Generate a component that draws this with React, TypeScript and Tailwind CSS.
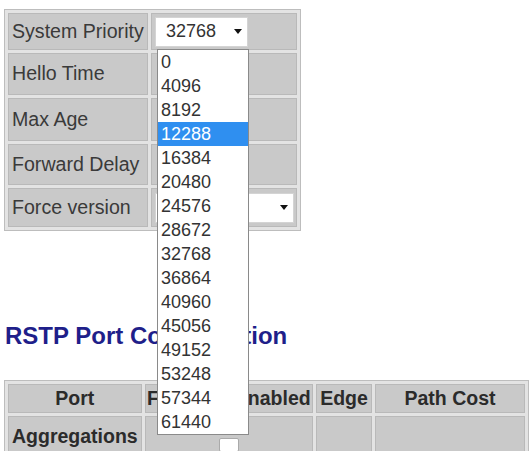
const priorities = [
  0, 4096, 8192, 12288, 16384, 20480, 24576, 28672, 32768, 36864, 40960, 45056, 49152, 53248, 57344, 61440,
]

function Arrow() {
  return (
    <svg width="8" height="5" viewBox="0 0 8 5" className="shrink-0">
      <path d="M0 0 H8 L4 5 Z" fill="#111" />
    </svg>
  )
}

const labelRows = [
  { label: 'System Priority', h: 'h-[37px]' },
  { label: 'Hello Time', h: 'h-[42px]' },
  { label: 'Max Age', h: 'h-[43px]' },
  { label: 'Forward Delay', h: 'h-[41px]' },
  { label: 'Force version', h: 'h-[39px]' },
]

export default function App() {
  return (
    <div className="relative h-[451px] w-[529px] overflow-hidden bg-white font-['Liberation_Sans',Arial,sans-serif]">
      <table className="ml-[4px] mt-[9px] border-separate border-spacing-[3px] border border-[#bdbdbd] bg-[#e3e3e3]">
        <tbody>
          {labelRows.map((row, i) => (
            <tr key={row.label}>
              <td className={`${row.h} w-[140px] whitespace-nowrap border border-[#b9b9b9] bg-[#c9c9c9] px-[3px] align-middle text-[19.6px] leading-none text-[#3a3a3a]`}>
                {row.label}
              </td>
              <td className={`${row.h} w-[146px] border border-[#b9b9b9] bg-[#c9c9c9] p-0 align-middle`}>
                {i === 0 && (
                  <div className="ml-[3px] flex h-[30px] w-[93px] items-center justify-between border border-[#d4d4d4] bg-white pl-[10px] pr-[5px] text-[18px] text-[#333]">
                    <span>32768</span>
                    <Arrow />
                  </div>
                )}
                {i === 4 && (
                  <div className="ml-[3px] flex h-[30px] w-[139px] items-center justify-end border border-[#d4d4d4] bg-white pr-[5px]">
                    <Arrow />
                  </div>
                )}
              </td>
            </tr>
          ))}
        </tbody>
      </table>

      <h2 className="ml-[5px] mt-[91px] text-[24px] font-bold leading-[28px] text-[#1f1f8a]">RSTP Port Configuration</h2>

      <table className="ml-[4px] mt-[30px] border-separate border-spacing-[3px] border border-[#bdbdbd] bg-[#e3e3e3] text-[19.5px] font-bold text-[#2b2b2b]">
        <tbody>
          <tr>
            <td className="h-[29px] w-[130px] border border-[#b9b9b9] bg-[#c9c9c9] p-0 text-center leading-none">Port</td>
            <td className="h-[29px] w-[170px] border border-[#b9b9b9] bg-[#c9c9c9] p-0 text-center leading-none">Function Enabled</td>
            <td className="h-[29px] w-[56px] border border-[#b9b9b9] bg-[#c9c9c9] p-0 text-center leading-none">Edge</td>
            <td className="h-[29px] w-[152px] border border-[#b9b9b9] bg-[#c9c9c9] p-0 text-center leading-none">Path Cost</td>
          </tr>
          <tr>
            <td className="h-[50px] border border-[#b9b9b9] bg-[#c9c9c9] px-[3px] pt-[10px] align-top leading-none">Aggregations</td>
            <td className="h-[50px] border border-[#b9b9b9] bg-[#c9c9c9] p-0 align-top">
              <div className="mx-auto mt-[21px] h-[14px] w-[20px] rounded-[2px] border border-[#aaa] bg-white" />
            </td>
            <td className="h-[50px] border border-[#b9b9b9] bg-[#c9c9c9] p-0" />
            <td className="h-[50px] border border-[#b9b9b9] bg-[#c9c9c9] p-0" />
          </tr>
        </tbody>
      </table>

      <ul className="absolute left-[157px] top-[49px] w-[92px] border border-[#8a8a8a] bg-white text-[18px] text-[#333]">
        {priorities.map((p) => (
          <li
            key={p}
            className={`flex h-[24px] items-center pl-[3px] leading-none ${p === 12288 ? 'bg-[#2f8ff0] text-white' : ''}`}
          >
            {p}
          </li>
        ))}
      </ul>
    </div>
  )
}
